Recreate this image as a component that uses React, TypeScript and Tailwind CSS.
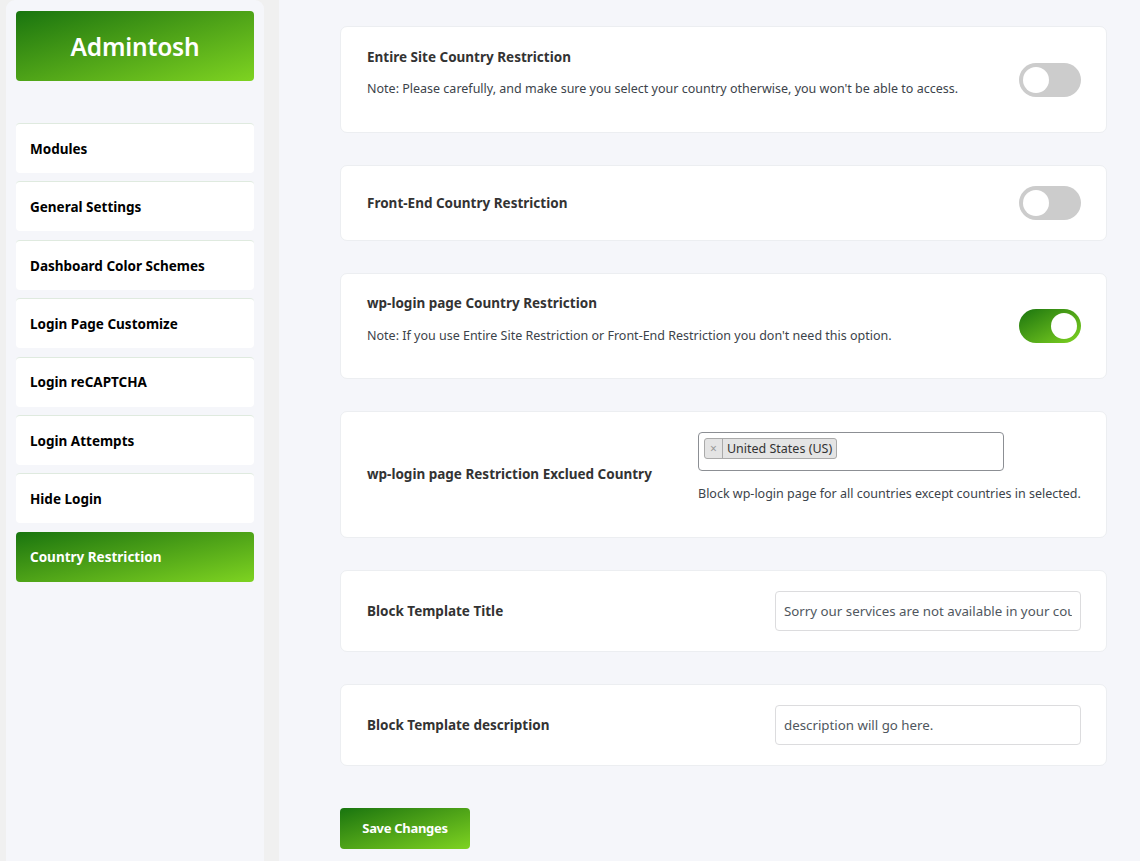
import React from 'react';

const menu = [
  'Modules',
  'General Settings',
  'Dashboard Color Schemes',
  'Login Page Customize',
  'Login reCAPTCHA',
  'Login Attempts',
  'Hide Login',
  'Country Restriction',
];

const Toggle = ({ on }: { on?: boolean }) => (
  <div
    className={`relative w-[62px] h-[34px] rounded-full shrink-0 ${
      on ? 'bg-gradient-to-br from-[#17750f] to-[#7ed321]' : 'bg-[#cccccc]'
    }`}
  >
    <div
      className={`absolute top-[4px] w-[26px] h-[26px] rounded-full bg-white ${on ? 'left-[32px]' : 'left-[4px]'}`}
    ></div>
  </div>
);

const Card = ({ className = '', children }: { className?: string; children: React.ReactNode }) => (
  <div className={`bg-white border border-[#eceef1] rounded-[7px] pl-[26px] pr-[25px] ${className}`}>{children}</div>
);

const App = () => {
  return (
    <div className="flex min-h-[861px] bg-[#f0f0f0] text-[#1d2327]" style={{ fontFamily: '"Noto Sans", "Open Sans", sans-serif' }}>
      {/* Sidebar */}
      <aside className="ml-[6px] w-[258px] shrink-0 bg-[#f5f6fa] rounded-t-[9px] px-[10px] pt-[11px]">
        <div className="h-[70px] rounded-[4px] bg-gradient-to-br from-[#17750f] to-[#7ed321] flex items-center justify-center">
          <span className="mt-[3px] text-white text-[24.5px] font-semibold tracking-[-0.2px]">Admintosh</span>
        </div>
        <nav className="mt-[42px] flex flex-col gap-[8.4px]">
          {menu.map((item) => {
            const active = item === 'Country Restriction';
            return (
              <div
                key={item}
                className={`h-[50px] rounded-[4px] flex items-center px-[14px] text-[13.5px] font-bold ${
                  active
                    ? 'bg-gradient-to-br from-[#17750f] to-[#7ed321] text-white'
                    : 'bg-white text-black border-t border-[#dfeadf]'
                }`}
              >
                <span className="mt-[1px]">{item}</span>
              </div>
            );
          })}
        </nav>
      </aside>

      {/* Main */}
      <main className="ml-[15px] flex-1 bg-[#f5f6fa] pl-[61px] pr-[34px] pt-[26px] pb-[12px]">
        <div className="w-[767px] flex flex-col gap-[32px]">
          <Card className="h-[107px] flex items-center justify-between">
            <div className="-mt-[14px]">
              <h3 className="text-[13.5px] font-bold text-[#333] leading-[20px]">Entire Site Country Restriction</h3>
              <p className="mt-[12px] text-[12.5px] text-[#3c434a] leading-[20px]">
                Note: Please carefully, and make sure you select your country otherwise, you won't be able to access.
              </p>
            </div>
            <Toggle />
          </Card>

          <Card className="h-[76px] flex items-center justify-between">
            <h3 className="text-[13.5px] font-bold text-[#333]">Front-End Country Restriction</h3>
            <Toggle />
          </Card>

          <Card className="h-[106px] flex items-center justify-between">
            <div className="-mt-[13px]">
              <h3 className="text-[13.5px] font-bold text-[#333] leading-[20px]">wp-login page Country Restriction</h3>
              <p className="mt-[13px] text-[12.5px] text-[#3c434a] leading-[20px]">
                Note: If you use Entire Site Restriction or Front-End Restriction you don't need this option.
              </p>
            </div>
            <Toggle on />
          </Card>

          <Card className="h-[127px] flex items-center">
            <h3 className="w-[331px] shrink-0 text-[13.5px] font-bold text-[#333]">wp-login page Restriction Exclued Country</h3>
            <div className="-mt-[14px] flex flex-col flex-1">
              <div className="w-[306px] h-[39px] border border-[#8c8f94] rounded-[4px] bg-white px-[5px] pt-[5px] flex items-start">
                <span className="inline-flex items-center h-[21px] border border-[#aaa] rounded-[3px] bg-[#e4e4e4] text-[12.5px] text-[#333]">
                  <span className="px-[5px] text-[#999] text-[12px] border-r border-[#aaa] leading-[19px]">×</span>
                  <span className="px-[4px] leading-[19px]">United States (US)</span>
                </span>
              </div>
              <p className="mt-[14px] text-[12.5px] text-[#3c434a] whitespace-nowrap">Block wp-login page for all countries except countries in selected.</p>
            </div>
          </Card>

          <Card className="h-[82px] flex items-center justify-between">
            <h3 className="text-[13.5px] font-bold text-[#333]">Block Template Title</h3>
            <input
              readOnly
              value="Sorry our services are not available in your country"
              className="w-[306px] h-[40px] border border-[#dcdcde] rounded-[4px] px-[8px] text-[13.3px] text-[#50575e] outline-none"
            />
          </Card>

          <Card className="h-[82px] flex items-center justify-between">
            <h3 className="text-[13.5px] font-bold text-[#333]">Block Template description</h3>
            <input
              readOnly
              value="description will go here."
              className="w-[306px] h-[40px] border border-[#dcdcde] rounded-[4px] px-[8px] text-[13.3px] text-[#50575e] outline-none"
            />
          </Card>
        </div>

        <button className="mt-[42px] w-[130px] h-[41px] rounded-[4px] bg-gradient-to-br from-[#17750f] to-[#7ed321] text-white text-[13px] font-bold tracking-[-0.3px]">
          Save Changes
        </button>
      </main>
    </div>
  );
};

export default App;
